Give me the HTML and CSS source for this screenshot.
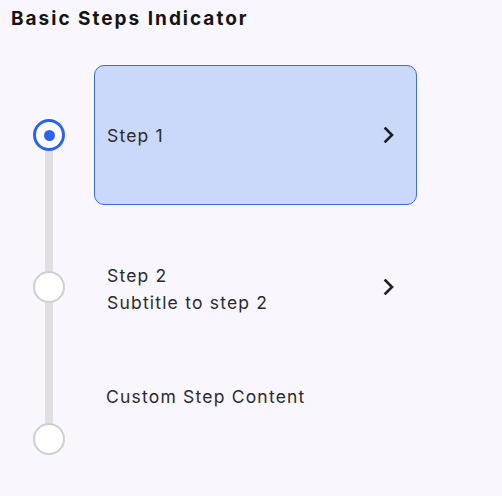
FILE: index.html
```html
<!DOCTYPE html>
<html>
<head>
<meta charset="utf-8">
<link rel="stylesheet" href="styles.css">
</head>
<body>
<h1 class="title">Basic Steps Indicator</h1>
<div class="steps">
  <div class="step step-first">
    <div class="rail">
      <span class="seg seg-none"></span>
      <span class="dot dot-active"><span class="dot-core"></span></span>
      <span class="seg"></span>
    </div>
    <div class="content">
      <div class="card card-active">
        <div class="texts"><div class="label">Step 1</div></div>
        <svg class="chev" width="14" height="16" viewBox="0 0 14 16"><polyline points="3.5,1.5 10,8 3.5,14.5" fill="none" stroke="#1f1f1f" stroke-width="2.6" stroke-linecap="square" stroke-linejoin="miter"/></svg>
      </div>
    </div>
  </div>
  <div class="step">
    <div class="rail">
      <span class="seg"></span>
      <span class="dot"></span>
      <span class="seg"></span>
    </div>
    <div class="content">
      <div class="card">
        <div class="texts texts-two">
          <div class="label">Step 2</div>
          <div class="label">Subtitle to step 2</div>
        </div>
        <svg class="chev" width="14" height="16" viewBox="0 0 14 16"><polyline points="3.5,1.5 10,8 3.5,14.5" fill="none" stroke="#1f1f1f" stroke-width="2.6" stroke-linecap="square" stroke-linejoin="miter"/></svg>
      </div>
    </div>
  </div>
  <div class="step step-last">
    <div class="rail">
      <span class="seg"></span>
      <span class="dot"></span>
      <span class="seg seg-none"></span>
    </div>
    <div class="content content-custom">
      <div class="label">Custom Step Content</div>
    </div>
  </div>
</div>
</body>
</html>
```
FILE: styles.css
```css
html, body {
  margin: 0;
  padding: 0;
  background: #f9f6fd;
  font-family: Inter, "Noto Sans", sans-serif;
  color: #1d1b20;
  overflow: hidden;
}
.title {
  margin: 0;
  padding: 7px 0 0 11px;
  font-size: 19px;
  font-weight: 650;
  line-height: 24px;
  color: #141414;
  letter-spacing: 2px;
}
.steps {
  padding-left: 33px;
  margin-top: 28px;
}
.step {
  display: flex;
  height: 152px;
}
.rail {
  width: 32px;
  display: flex;
  flex-direction: column;
  align-items: center;
}
.seg {
  flex: 1;
  width: 8px;
  background: #e0dfe2;
}
.seg-none {
  background: transparent;
}
.dot {
  width: 32px;
  height: 32px;
  box-sizing: border-box;
  border-radius: 50%;
  border: 2px solid #cfcdd1;
  background: #ffffff;
  display: flex;
  align-items: center;
  justify-content: center;
  flex: none;
}
.dot-active {
  border: 3px solid #2b63ec;
}
.dot-core {
  width: 11px;
  height: 11px;
  border-radius: 50%;
  background: #2b63ec;
}
.content {
  margin-left: 29px;
  width: 323px;
  padding: 6px 0;
  box-sizing: border-box;
  display: flex;
}
.card {
  flex: 1;
  display: flex;
  align-items: center;
  padding: 0 20px 0 12px;
  border: 1px solid transparent;
  border-radius: 10px;
}
.card-active {
  background: #cad9fa;
  border-color: #3a6ee9;
}
.texts {
  flex: 1;
}
.texts-two {
  padding-top: 3px;
}
.label {
  font-size: 17.5px;
  line-height: 27px;
  letter-spacing: 1.2px;
  color: #2a2930;
}
.chev {
  display: block;
}
.content-custom {
  padding: 20px 0 0 12px;
  align-items: flex-start;
}
```
